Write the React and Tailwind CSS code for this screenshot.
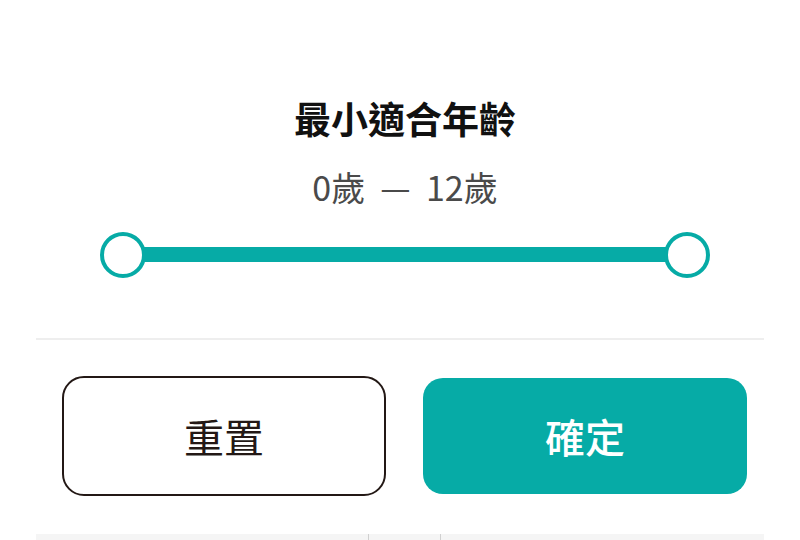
import { useState } from "react";

const FONT = { fontFamily: '"Noto Sans CJK TC", "Noto Sans", sans-serif' };

function RangeSlider({ min, max }) {
  return (
    <div className="relative h-[46px] w-[610px] mx-auto">
      {/* Track */}
      <div className="absolute left-[22px] right-[22px] top-[15px] h-[15px] bg-[#06aba6]" />
      {/* Thumbs */}
      <div className="absolute left-0 top-0 w-[46px] h-[46px] rounded-full border-[4px] border-[#06aba6] bg-white" />
      <div className="absolute right-0 top-0 w-[46px] h-[46px] rounded-full border-[4px] border-[#06aba6] bg-white" />
    </div>
  );
}

export default function App() {
  const [range] = useState({ min: 0, max: 12 });

  return (
    <div className="w-[800px] h-[540px] bg-white overflow-hidden" style={FONT}>
      <div className="pt-[94px] flex flex-col items-center pl-[10px]">
        <h2 className="text-[37px] leading-[48px] font-bold text-[#111]">最小適合年齡</h2>
        <p className="mt-[25px] text-[34px] leading-[40px] text-[#4a4a4a]">
          {range.min}歲 &nbsp;—&nbsp; {range.max}歲
        </p>
      </div>

      <div className="mt-[25px] pl-[10px]">
        <RangeSlider min={range.min} max={range.max} />
      </div>

      {/* Divider */}
      <div className="mx-[36px] mt-[60px] h-[2px] bg-[#eeeeee]" />

      {/* Buttons */}
      <div className="flex items-center gap-[37px] pl-[62px] pt-[36px]">
        <button className="w-[324px] h-[120px] rounded-[22px] border-2 border-[#231815] bg-white text-[40px] text-[#231815]">
          重置
        </button>
        <button className="w-[324px] h-[116px] rounded-[20px] bg-[#06aba6] text-[40px] font-medium text-white">
          確定
        </button>
      </div>

      {/* Bottom bar */}
      <div className="mx-[36px] mt-[38px] h-[10px] bg-[#f5f5f5] flex">
        <div className="w-[333px] border-r border-[#d0d0d0]" />
        <div className="w-[72px] border-r border-[#d0d0d0]" />
      </div>
    </div>
  );
}
